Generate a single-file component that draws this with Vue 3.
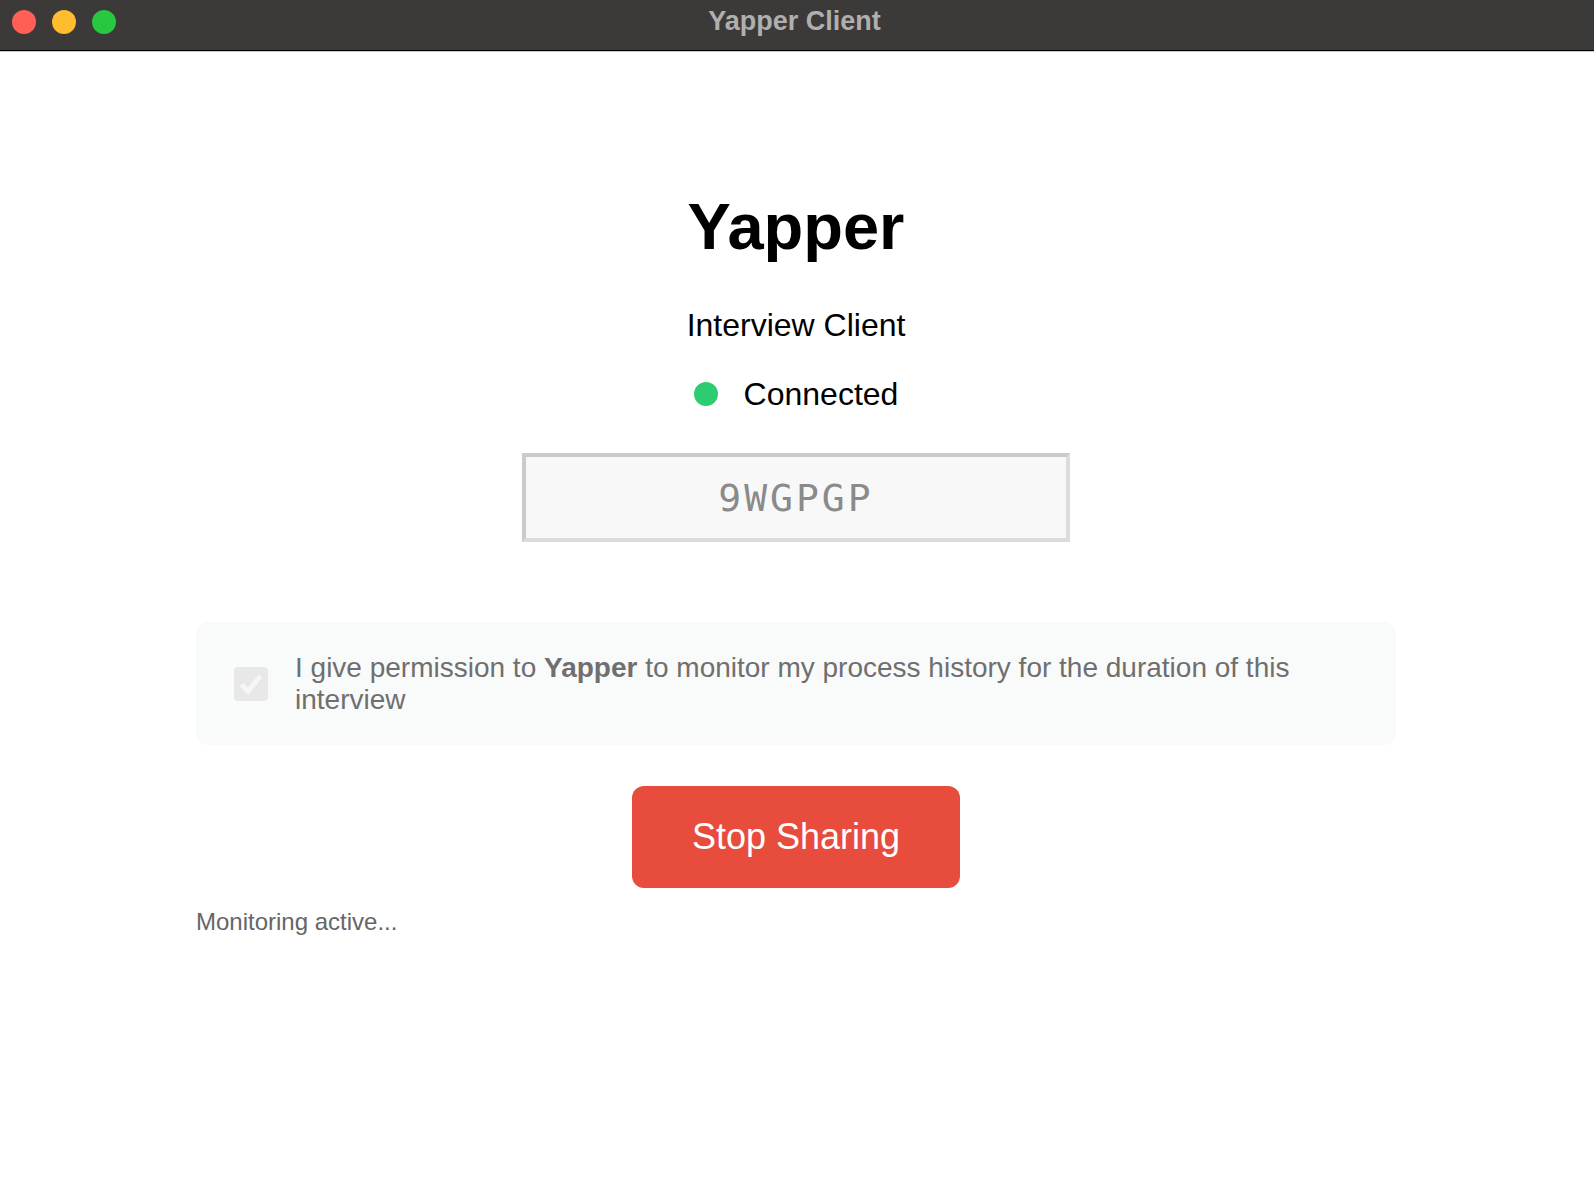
<script setup>
const code = '9WGPGP'
</script>

<template>
  <div class="window">
    <header class="titlebar">
      <div class="lights">
        <span class="light red"></span>
        <span class="light yellow"></span>
        <span class="light green"></span>
      </div>
      <span class="window-title">Yapper Client</span>
    </header>

    <main class="content">
      <h1 class="title">Yapper</h1>
      <p class="subtitle">Interview Client</p>
      <div class="status">
        <span class="status-dot"></span>
        <span>Connected</span>
      </div>
      <div class="code-box">{{ code }}</div>

      <div class="consent">
        <span class="checkbox">
          <svg width="28" height="28" viewBox="0 0 28 28" fill="none">
            <path d="M4.5 14.5l6.5 7L23.5 6" stroke="#f6f6f6" stroke-width="5" />
          </svg>
        </span>
        <p class="consent-text">
          I give permission to <strong>Yapper</strong> to monitor my process history for the duration of this interview
        </p>
      </div>

      <button class="stop-btn">Stop Sharing</button>
      <p class="monitoring">Monitoring active...</p>
    </main>
  </div>
</template>

<style>
html, body {
  background: #fff;
}
</style>

<style scoped>
.window {
  height: 1186px;
  font-family: "Liberation Sans", Arial, sans-serif;
  background: #fff;
  overflow: hidden;
}

.titlebar {
  height: 50px;
  box-sizing: content-box;
  display: flex;
  align-items: center;
  justify-content: center;
  position: relative;
  background: #3c3a39;
  border-bottom: 1px solid #000;
  box-shadow: 0 1px 0 #c8c8c8;
}

.lights {
  position: absolute;
  left: 12px;
  top: 10px;
  display: flex;
  gap: 16px;
}

.light {
  width: 24px;
  height: 24px;
  border-radius: 50%;
}

.red { background: #ff5f57; }
.yellow { background: #febc2e; }
.green { background: #28c840; }

.window-title {
  font-size: 27px;
  font-weight: 700;
  color: #b0afae;
  margin: -8px 5px 0 0;
}

.content {
  width: 1200px;
  margin: 0 auto;
  transform: translateX(-1px);
  display: flex;
  flex-direction: column;
  align-items: center;
}

.title {
  margin: 139px 0 0;
  font-size: 65px;
  line-height: 74px;
  font-weight: 700;
  color: #000;
}

.subtitle {
  margin: 43px 0 0;
  font-size: 32px;
  line-height: 37px;
  color: #000;
}

.status {
  margin-top: 32px;
  display: flex;
  align-items: center;
  gap: 26px;
  font-size: 32px;
  line-height: 37px;
  color: #000;
}

.status-dot {
  width: 24px;
  height: 24px;
  margin-bottom: 2px;
  border-radius: 50%;
  background: #2ecc71;
}

.code-box {
  margin-top: 40px;
  width: 548px;
  height: 89px;
  box-sizing: border-box;
  display: flex;
  align-items: center;
  justify-content: center;
  border: 4px solid;
  border-color: #cbcbcb #dcdcdc #dcdcdc #cbcbcb;
  background: #f8f8f8;
  font-family: "DejaVu Sans Mono", monospace;
  font-size: 38px;
  letter-spacing: 3px;
  color: #8a8a8a;
}

.consent {
  margin-top: 80px;
  width: 100%;
  height: 123px;
  box-sizing: border-box;
  padding: 0 40px 0 38px;
  display: flex;
  align-items: center;
  gap: 27px;
  background: #f9fafa;
  border-radius: 12px;
}

.checkbox {
  flex: none;
  width: 34px;
  height: 34px;
  display: flex;
  align-items: center;
  justify-content: center;
  background: #e8e8e8;
  border-radius: 4px;
}

.consent-text {
  margin: 0;
  font-size: 28px;
  line-height: 32px;
  color: #6f6f6f;
}

.stop-btn {
  margin-top: 41px;
  width: 328px;
  height: 102px;
  border: none;
  border-radius: 12px;
  background: #e74c3c;
  color: #fff;
  font-family: inherit;
  font-size: 36px;
}

.monitoring {
  margin: 20px 0 0;
  align-self: flex-start;
  font-size: 24px;
  line-height: 28px;
  color: #666;
}
</style>
